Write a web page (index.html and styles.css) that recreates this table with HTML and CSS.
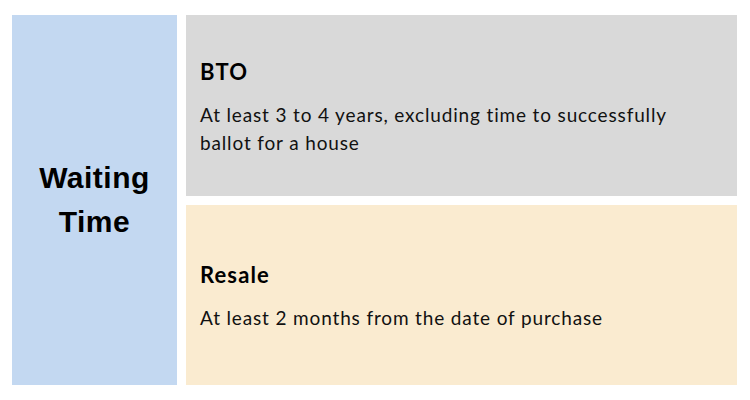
FILE: index.html
```html
<!DOCTYPE html>
<html>
<head>
<meta charset="utf-8">
<link rel="stylesheet" href="styles.css">
</head>
<body>
<div class="board">
  <div class="label"><h1 class="label-text">Waiting<br>Time</h1></div>
  <div class="options">
    <section class="card card-bto">
      <h2 class="card-title">BTO</h2>
      <p class="card-text">At least 3 to 4 years, excluding time to successfully<br>ballot for a house</p>
    </section>
    <section class="card card-resale">
      <h2 class="card-title">Resale</h2>
      <p class="card-text">At least 2 months from the date of purchase</p>
    </section>
  </div>
</div>
</body>
</html>
```
FILE: styles.css
```css
html, body { margin: 0; padding: 0; background: #ffffff; }
body { width: 750px; height: 400px; font-family: Lato, "Open Sans", sans-serif; color: #111; }
.board {
  box-sizing: border-box;
  height: 400px;
  padding: 15px 13px 15px 12px;
  display: grid;
  grid-template-columns: 165px 1fr;
  column-gap: 9px;
}
.label {
  background: #c3d8f1;
  display: flex;
  align-items: center;
  justify-content: center;
}
.label-text {
  margin: 0;
  text-align: center;
  font-family: "Liberation Sans", Arial, sans-serif;
  font-weight: 700;
  font-size: 30px;
  line-height: 44px;
  letter-spacing: 0.5px;
  color: #000;
}
.options {
  display: grid;
  grid-template-rows: 181px 180px;
  row-gap: 9px;
}
.card {
  display: flex;
  flex-direction: column;
  justify-content: center;
  padding: 4px 14px 0;
}
.card-bto { background: #d9d9d9; }
.card-resale { background: #faebd0; }
.card-title {
  margin: 0 0 16px;
  font-size: 22px;
  font-weight: 700;
  line-height: 26px;
  letter-spacing: 1.1px;
  color: #000;
}
.card-text {
  margin: 0;
  font-size: 19px;
  line-height: 28px;
  letter-spacing: 0.85px;
  color: #111;
}
```
